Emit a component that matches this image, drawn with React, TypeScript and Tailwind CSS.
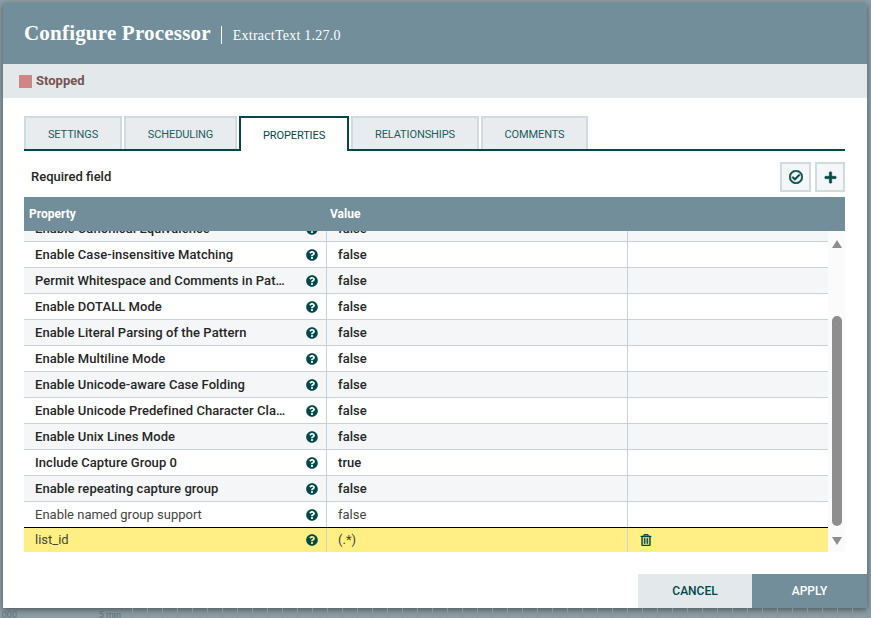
import { FaPlus, FaQuestionCircle, FaRegCheckCircle, FaRegTrashAlt } from "react-icons/fa";

const rows = [
  { name: "Enable Canonical Equivalence", value: "false", bold: true },
  { name: "Enable Case-insensitive Matching", value: "false", bold: true },
  { name: "Permit Whitespace and Comments in Pattern", value: "false", bold: true },
  { name: "Enable DOTALL Mode", value: "false", bold: true },
  { name: "Enable Literal Parsing of the Pattern", value: "false", bold: true },
  { name: "Enable Multiline Mode", value: "false", bold: true },
  { name: "Enable Unicode-aware Case Folding", value: "false", bold: true },
  { name: "Enable Unicode Predefined Character Classes", value: "false", bold: true },
  { name: "Enable Unix Lines Mode", value: "false", bold: true },
  { name: "Include Capture Group 0", value: "true", bold: true },
  { name: "Enable repeating capture group", value: "false", bold: true },
  { name: "Enable named group support", value: "false", bold: false },
];

const tabs = [
  { label: "SETTINGS", width: "w-[98px]" },
  { label: "SCHEDULING", width: "w-[113px]" },
  { label: "PROPERTIES", width: "w-[110px]", active: true },
  { label: "RELATIONSHIPS", width: "w-[128px]" },
  { label: "COMMENTS", width: "w-[107px]" },
];

const App = () => {
  return (
    <div className="h-[618px] w-[871px] overflow-hidden bg-[#8c9da6] font-['Roboto',sans-serif]">
      <div className="ml-[3px] mt-[3px] flex h-[605px] w-[864px] flex-col bg-white shadow-[0_2px_6px_rgba(0,0,0,0.45)]">
        {/* HEADER */}
        <div className="flex h-[61px] shrink-0 items-center bg-[#728e9b] pl-[21px] pt-[3px] text-white">
          <span className="-mt-[2px] font-['Liberation_Serif',serif] text-[21px] font-bold tracking-[0.2px]">
            Configure Processor
          </span>
          <span className="ml-[10px] h-[18px] w-px bg-white" />
          <span className="ml-[11px] font-['Liberation_Serif',serif] text-[14px] tracking-[0.25px]">
            ExtractText 1.27.0
          </span>
        </div>

        {/* STATUS */}
        <div className="flex h-[34px] shrink-0 items-center bg-[#e3e8eb] pl-[16px]">
          <span className="h-[13px] w-[13px] bg-[#d18686]" />
          <span className="ml-[4px] text-[13px] font-bold text-[#775351]">Stopped</span>
        </div>

        {/* BODY */}
        <div className="flex min-h-0 flex-1 flex-col px-[21px] pt-[18px]">
          <div className="flex h-[35px] w-[821px] shrink-0 items-stretch gap-[2px] border-b-2 border-[#004849]">
            {tabs.map((tab) => (
              <div
                key={tab.label}
                className={
                  tab.active
                    ? `${tab.width} -mb-[2px] flex items-center justify-center border-2 border-b-0 border-[#004849] bg-white pt-[3px] text-[11px] tracking-[-0.1px] text-[#004849]`
                    : `${tab.width} flex items-center justify-center border-2 border-b-0 border-[#cfdbdf] bg-[#e8ecef] pt-[3px] text-[11px] tracking-[-0.1px] text-[#1c5c5d]`
                }
              >
                {tab.label}
              </div>
            ))}
          </div>

          <div className="flex h-[46px] w-[821px] shrink-0 items-end justify-between pb-[5px] pl-[7px]">
            <span className="mt-[11px] self-center text-[13px] font-medium text-[#262626]">Required field</span>
            <div className="flex gap-[4px]">
              <div className="flex h-[30px] w-[31px] items-center justify-center border-2 border-[#cfdbdf] bg-[#f4f6f7] text-[#004849]">
                <FaRegCheckCircle className="stroke-current stroke-[24] text-[14px]" />
              </div>
              <div className="flex h-[30px] w-[30px] items-center justify-center border-2 border-[#cfdbdf] bg-[#f4f6f7] text-[#004849]">
                <FaPlus className="stroke-current stroke-[20] text-[13px]" />
              </div>
            </div>
          </div>

          {/* TABLE */}
          <div className="flex h-[34px] w-[821px] shrink-0 items-center bg-[#728e9b] text-[12px] font-bold text-white">
            <span className="w-[306px] pl-[5px]">Property</span>
            <span>Value</span>
          </div>
          <div className="flex h-[321px] w-[821px] shrink-0">
            <div className="h-full w-[804px] overflow-hidden text-[13px] text-[#444444]">
              <div className="-mt-[15px]">
                {rows.map((row, i) => (
                  <div
                    key={row.name}
                    className={`flex h-[26px] items-center border-b border-[#c7d2d7] ${
                      i % 2 === 0 ? "bg-[#f4f6f7]" : "bg-white"
                    } ${row.bold ? "font-medium tracking-[0.06px] text-[#262626]" : ""}`}
                  >
                    <div className="flex h-full w-[303px] shrink-0 items-center border-r border-[#c7d2d7] pl-[11px] pr-[8px]">
                      <span className="w-[252px] truncate">{row.name}</span>
                      <FaQuestionCircle className="ml-auto text-[12px] text-[#004849]" />
                    </div>
                    <div className="flex h-full w-[301px] shrink-0 items-center border-r border-[#c7d2d7] pl-[11px]">
                      {row.value}
                    </div>
                  </div>
                ))}
                <div className="-mt-px flex h-[25px] items-center border-t border-black bg-[#ffef85]">
                  <div className="flex h-full w-[303px] shrink-0 items-center border-r border-[#c7d2d7] pl-[11px] pr-[8px]">
                    <span>list_id</span>
                    <FaQuestionCircle className="ml-auto text-[12px] text-[#004849]" />
                  </div>
                  <div className="flex h-full w-[301px] shrink-0 items-center border-r border-[#c7d2d7] pl-[11px]">
                    (.*)
                  </div>
                  <FaRegTrashAlt className="ml-[12px] stroke-current stroke-[16] text-[12px] text-[#004849]" />
                </div>
              </div>
            </div>
            {/* SCROLLBAR */}
            <div className="flex w-[17px] flex-col items-center bg-[#fbfbfb] pl-px">
              <span className="mt-[9px] h-0 w-0 border-x-[5px] border-b-[8px] border-x-transparent border-b-[#8e8e8e]" />
              <span className="mt-[68px] h-[210px] w-[10px] rounded-[5px] bg-[#8e8e8e]" />
              <span className="mt-[11px] h-0 w-0 border-x-[5px] border-t-[8px] border-x-transparent border-t-[#8e8e8e]" />
            </div>
          </div>
        </div>

        {/* FOOTER */}
        <div className="flex h-[34px] shrink-0 justify-end text-[12px] font-medium">
          <div className="flex w-[114px] items-center justify-center bg-[#e3e8eb] text-[#004849]">CANCEL</div>
          <div className="flex w-[115px] items-center justify-center bg-[#728e9b] text-white">APPLY</div>
        </div>
      </div>

      {/* canvas behind the dialog */}
      <div className="flex h-[10px] w-[871px] text-[9px] leading-[10px] text-[#5f6f78]">
        <div className="flex w-[132px] shrink-0 justify-between pr-[11px] pt-[2px]">
          <span>,000</span>
          <span>5 min</span>
        </div>
        <div className="flex-1 bg-[repeating-linear-gradient(90deg,#84959e_0,#84959e_1px,transparent_1px,transparent_15px)]" />
      </div>
    </div>
  );
};

export default App;
